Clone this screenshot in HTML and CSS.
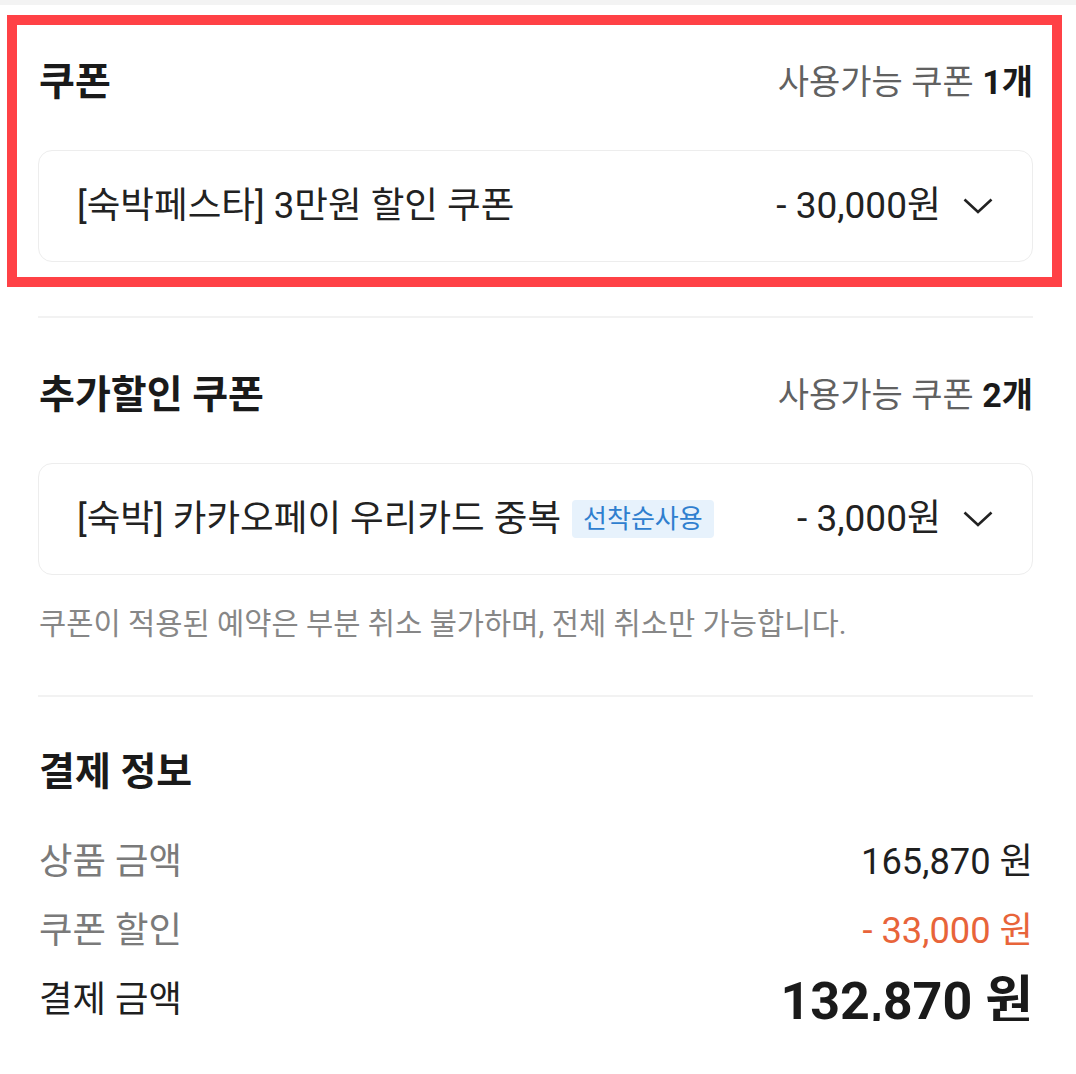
FILE: index.html
```html
<!DOCTYPE html>
<html lang="ko">
<head>
<meta charset="utf-8">
<title>쿠폰</title>
<link rel="stylesheet" href="styles.css">
</head>
<body>
<div class="topband"></div>
<main class="page">
  <section class="section section--highlight">
    <div class="section-head">
      <h2 class="section-title">쿠폰</h2>
      <span class="available">사용가능 쿠폰 <b>1개</b></span>
    </div>
    <div class="coupon">
      <div class="coupon-name">[숙박페스타] 3만원 할인 쿠폰</div>
      <div class="coupon-amount">- 30,000원</div>
      <svg class="chevron" viewBox="0 0 30 16" width="30" height="16"><path d="M1.5 1.5 L15 14 L28.5 1.5" fill="none" stroke="#222" stroke-width="2.6" stroke-linecap="butt" stroke-linejoin="miter"/></svg>
    </div>
  </section>

  <hr class="divider divider--first">

  <section class="section">
    <div class="section-head">
      <h2 class="section-title">추가할인 쿠폰</h2>
      <span class="available">사용가능 쿠폰 <b>2개</b></span>
    </div>
    <div class="coupon">
      <div class="coupon-name">[숙박] 카카오페이 우리카드 중복<span class="badge">선착순사용</span></div>
      <div class="coupon-amount">- 3,000원</div>
      <svg class="chevron" viewBox="0 0 30 16" width="30" height="16"><path d="M1.5 1.5 L15 14 L28.5 1.5" fill="none" stroke="#222" stroke-width="2.6" stroke-linecap="butt" stroke-linejoin="miter"/></svg>
    </div>
    <p class="note">쿠폰이 적용된 예약은 부분 취소 불가하며, 전체 취소만 가능합니다.</p>
  </section>

  <hr class="divider divider--second">

  <section class="section payment">
    <h2 class="section-title">결제 정보</h2>
    <div class="pay-rows">
      <div class="pay-row">
        <span class="pay-label">상품 금액</span>
        <span class="pay-value">165,870 원</span>
      </div>
      <div class="pay-row">
        <span class="pay-label">쿠폰 할인</span>
        <span class="pay-value pay-value--discount">- 33,000 원</span>
      </div>
      <div class="pay-row pay-row--total">
        <span class="pay-label">결제 금액</span>
        <span class="pay-value pay-value--total">132,870 원</span>
      </div>
    </div>
  </section>
</main>
</body>
</html>
```

FILE: styles.css
```css
* { box-sizing: border-box; }

html, body {
  margin: 0;
  padding: 0;
  background: #ffffff;
}

body {
  font-family: Roboto, "Noto Sans CJK KR", "Noto Sans", sans-serif;
  color: #1f1f1f;
  width: 1076px;
}

.topband {
  height: 5px;
  background: #f3f3f3;
}

.page {
  padding: 0 43px 0 38px;
}

.section {
  display: flex;
  flex-direction: column;
}

.section--highlight {
  margin: 10px -29px 0 -31px;
  border: 10px solid #ff4146;
  padding: 35px 19px 15px 21px;
}

.section-head {
  display: flex;
  justify-content: space-between;
  align-items: center;
  height: 44px;
}

.section-title {
  margin: 0;
  font-size: 39px;
  font-weight: 700;
  line-height: 44px;
  color: #1a1a1a;
  padding-left: 1px;
}

.available {
  font-size: 34px;
  color: #616161;
  line-height: 44px;
}

.available b {
  color: #1a1a1a;
  font-weight: 700;
}

.coupon {
  margin-top: 46px;
  height: 112px;
  border: 1.5px solid #ededed;
  border-radius: 14px;
  display: flex;
  align-items: center;
  padding: 0 39px 0 38px;
}

.coupon-name {
  flex: 1;
  display: flex;
  align-items: center;
  font-size: 36.6px;
  line-height: 44px;
  color: #222;
  white-space: nowrap;
}

.badge {
  margin-left: 11px;
  background: #e7f2fc;
  color: #2f7fcf;
  font-size: 26px;
  line-height: 38px;
  height: 38px;
  padding: 0 11px;
  border-radius: 4px;
}

.coupon-amount {
  font-size: 37px;
  line-height: 44px;
  color: #222;
  white-space: nowrap;
}

.chevron {
  margin-left: 22px;
  flex: none;
}

.divider {
  border: 0;
  height: 2px;
  background: #f2f2f2;
  margin: 0;
}

.divider--first {
  margin-top: 29px;
  margin-bottom: 55px;
}

.divider--second {
  margin-top: 51px;
  margin-bottom: 53px;
}

.note {
  margin: 29px 0 0 0;
  font-size: 29.6px;
  line-height: 40px;
  color: #878787;
  padding-left: 1px;
}

.pay-rows {
  margin-top: 39px;
  display: flex;
  flex-direction: column;
  gap: 19px;
}

.pay-row {
  display: flex;
  justify-content: space-between;
  align-items: center;
  height: 50px;
}

.pay-label {
  font-size: 36.4px;
  color: #7a7a7a;
  padding-left: 1px;
}

.pay-row--total .pay-label {
  color: #1f1f1f;
}

.pay-value {
  font-size: 36.3px;
  color: #1f1f1f;
}

.pay-value--discount {
  color: #e8643a;
}

.pay-value--total {
  font-size: 52px;
  font-weight: 700;
  color: #1a1a1a;
}
```
